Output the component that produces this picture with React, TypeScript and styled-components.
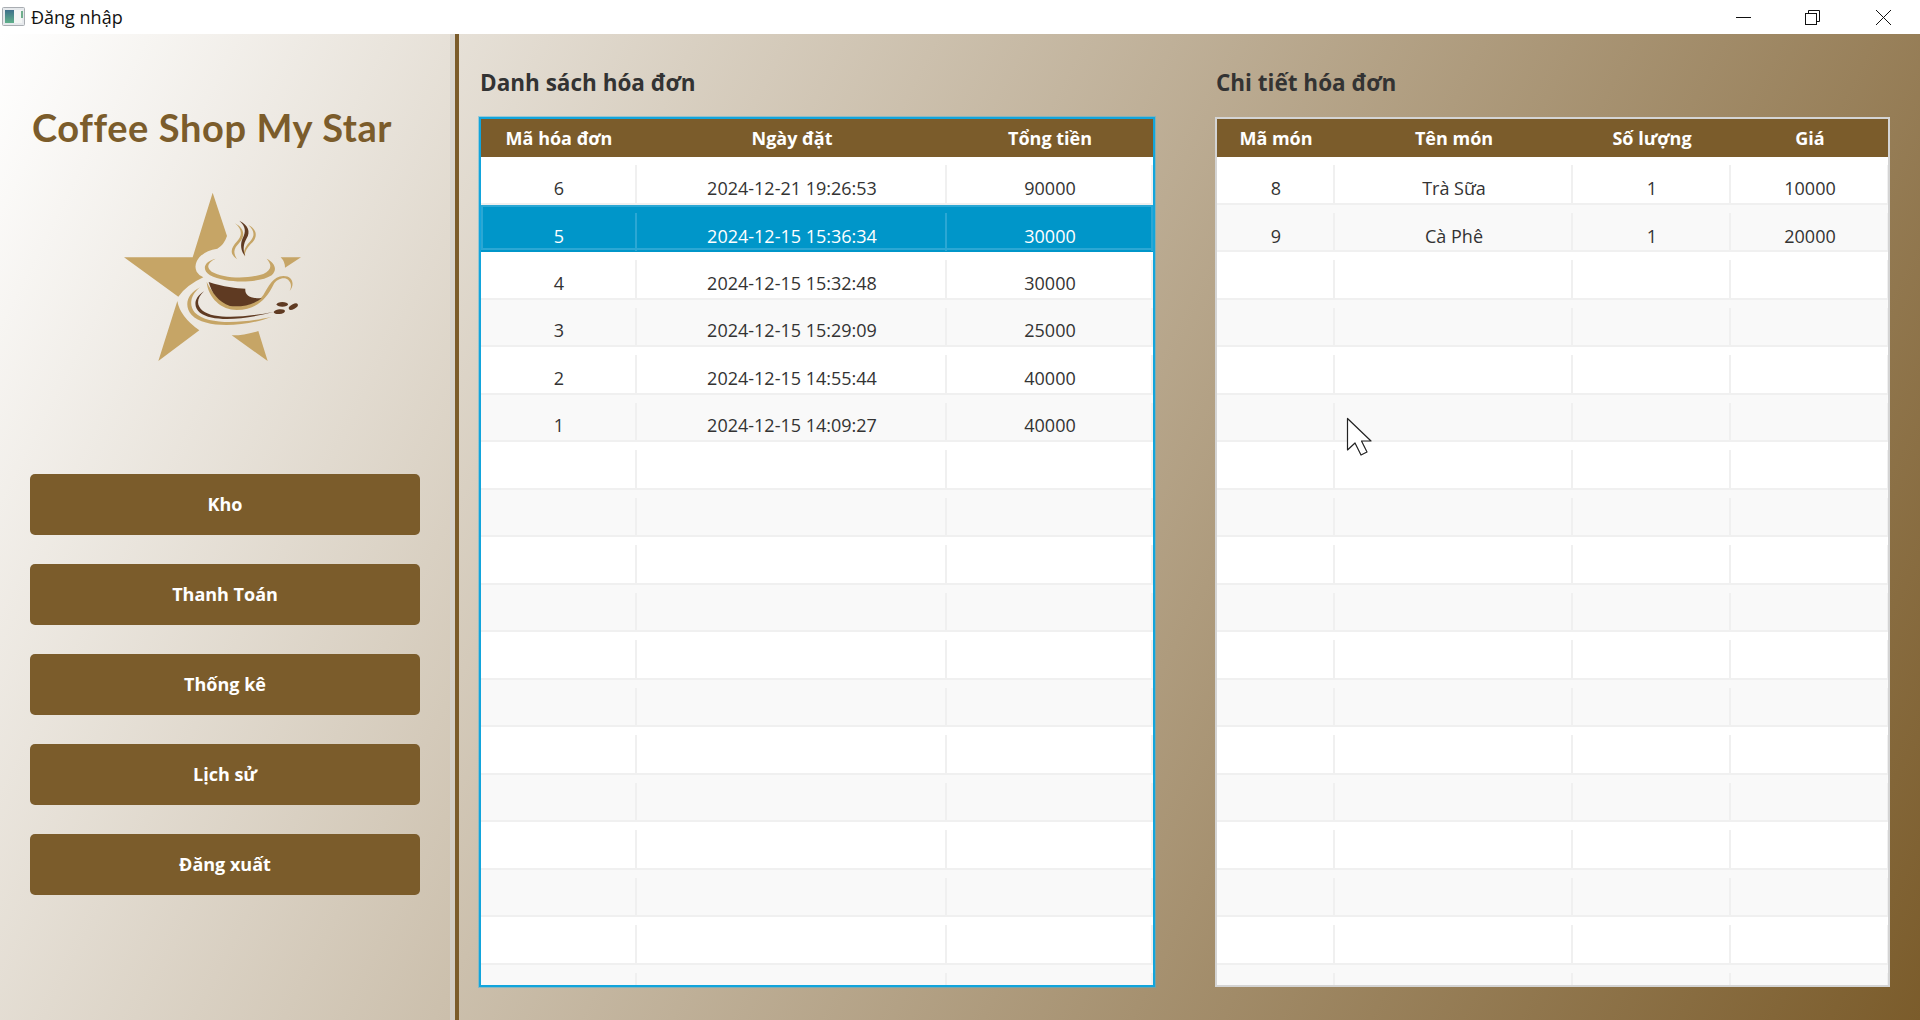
import React from "react";
import styled, { createGlobalStyle } from "styled-components";

const BROWN = "#7b5c2b";
const FONT = `"Open Sans", "Noto Sans", "Liberation Sans", sans-serif`;

const Global = createGlobalStyle`
  html, body { margin: 0; padding: 0; height: 100%; overflow: hidden; background: #fff; }
  #root { height: 100%; }
  * { box-sizing: border-box; }
`;

const Win = styled.div`
  position: relative;
  width: 1920px;
  height: 1020px;
  display: flex;
  flex-direction: column;
  font-family: ${FONT};
  overflow: hidden;
`;

const TitleBar = styled.header`
  height: 34px;
  flex: none;
  background: #fff;
  display: flex;
  align-items: center;
  padding-left: 2px;
`;

const AppIcon = styled.svg`
  width: 24px;
  height: 20px;
  flex: none;
`;

const WinTitle = styled.span`
  margin-left: 5px;
  flex: 1;
  font-size: 18px;
  color: #111;
  line-height: 34px;
`;

const WinControl = styled.button`
  width: 15px;
  height: 15px;
  border: 0;
  padding: 0;
  background: none;
  display: block;
  margin-left: ${(p: { $gap: number }) => p.$gap}px;
  svg { display: block; }
`;

const Controls = styled.div`
  display: flex;
  align-items: center;
  padding-right: 29px;
`;

const Body = styled.div`
  flex: 1;
  min-height: 0;
  display: flex;
  background: linear-gradient(117.2deg, #ffffff 0%, ${BROWN} 100%);
`;

const Sidebar = styled.aside`
  width: 459px;
  flex: none;
  border-right: 4px solid ${BROWN};
  box-shadow: inset -5px 0 0 rgba(214, 210, 202, 0.7);
  padding: 0 0 0 30px;
  display: flex;
  flex-direction: column;
`;

const Brand = styled.h1`
  margin: 70px 0 0 2px;
  font-family: "Lato", "Noto Sans", sans-serif;
  font-size: 38px;
  line-height: 46px;
  font-weight: 700;
  letter-spacing: 0.6px;
  color: ${BROWN};
  white-space: nowrap;
`;

const LogoSvg = styled.svg`
  display: block;
  width: 220px;
  height: 210px;
  margin: 20px 0 0 70px;
`;

const Menu = styled.nav`
  margin-top: 94px;
  display: flex;
  flex-direction: column;
  gap: 29px;
  width: 390px;
`;

const MenuButton = styled.button`
  height: 61px;
  border: 0;
  border-radius: 5px;
  padding: 0 0 2px;
  background: ${BROWN};
  color: #fff;
  font-family: ${FONT};
  font-size: 18px;
  font-weight: 700;
`;

const Main = styled.main`
  flex: 1;
  min-width: 0;
  display: flex;
  gap: 60px;
  padding: 0 30px 33px 20px;
`;

const Panel = styled.section<{ $width: number }>`
  width: ${(p) => p.$width}px;
  flex: none;
  display: flex;
  flex-direction: column;
`;

const Heading = styled.h2`
  margin: 31px 0 0 1px;
  height: 52px;
  font-size: 22.5px;
  line-height: 36px;
  font-weight: 700;
  color: #333;
`;

const Table = styled.div<{ $active?: boolean }>`
  flex: 1;
  min-height: 0;
  overflow: hidden;
  background: #fff;
  border: 2px solid ${(p) => (p.$active ? "#12a5dc" : "#d4d4d4")};
  box-shadow: 0 0 0 ${(p) => (p.$active ? "1px rgba(60,180,225,.45)" : "0 transparent")};
`;

const HeadRow = styled.div<{ $cols: string }>`
  display: grid;
  grid-template-columns: ${(p) => p.$cols};
  height: 38px;
  background: ${BROWN};
`;

const HeadCell = styled.div`
  display: flex;
  align-items: center;
  justify-content: center;
  color: #fff;
  font-size: 18px;
  font-weight: 700;
`;

const Row = styled.div<{ $cols: string; $alt: boolean; $selected: boolean }>`
  position: relative;
  display: grid;
  grid-template-columns: ${(p) => p.$cols};
  height: 47.5px;
  padding-top: 8px;
  background: ${(p) => (p.$selected ? "#0096c9" : p.$alt ? "#f9f9f9" : "#fff")};
  border-bottom: 2px solid ${(p) => (p.$selected ? "#0096c9" : "#f0f0f0")};
  color: ${(p) => (p.$selected ? "#fff" : "#333")};
  box-shadow: ${(p) => (p.$selected ? "inset 0 0 0 2px #2ba7d4" : "none")};
`;

const Cell = styled.div<{ $selected: boolean; $nudge: boolean }>`
  display: flex;
  align-items: center;
  justify-content: center;
  padding: ${(p) => (p.$nudge ? 9 : 7)}px 0 0 2px;
  margin-bottom: -1px;
  font-size: 18px;
  border-right: 2px solid ${(p) => (p.$selected ? "#2ba7d4" : "#f0f0f0")};
`;

const Pointer = styled.svg`
  position: absolute;
  left: 1346px;
  top: 417px;
  width: 27px;
  height: 40px;
`;

function Logo() {
  return (
    <LogoSvg viewBox="0 0 660 630" aria-label="Coffee Shop logo">
      <g fill="#c6a566">
        <path d="M338 68 L381 198 Q372 225 352 236 Q318 240 298 262 Q280 285 290 305 Q298 318 310 322 Q260 345 235 380 L72 262 L278 262 Z" />
        <path d="M232 393 Q240 440 298 481 L175 573 Z" />
        <path d="M395 496 Q430 497 475 483 L503 573 Z" />
        <path d="M542 262 L603 262 L555 293 Q555 275 542 262 Z" />
        <path d="M347 266 C310 275 305 300 330 316 C380 342 480 340 515 316 C532 300 527 280 500 266 C517 285 515 300 490 312 C440 328 370 325 335 305 C318 292 322 278 347 266 Z" />
        <path d="M320 336 C325 385 365 420 410 420 C470 420 500 385 520 345 C530 325 555 320 565 330 C575 340 575 352 568 364 C585 345 580 318 550 318 C520 318 505 350 490 375 C470 405 420 412 385 400 C350 385 335 365 320 336 Z" />
        <path d="M300 352 C262 372 250 405 275 435 C315 478 440 470 515 440 C440 458 325 468 285 428 C265 405 272 375 300 352 Z" />
        <path d="M405 160 C430 180 425 200 410 215 C395 232 385 250 412 268 C395 245 405 232 418 218 C438 195 432 175 405 160 Z" />
        <path d="M445 165 C475 180 472 205 452 222 C440 235 435 245 433 260 C428 240 440 225 452 212 C466 195 462 180 445 165 Z" />
      </g>
      <g fill="#5f3a22">
        <path d="M326 336 C370 350 410 356 436 356 C434 375 450 386 485 385 C460 405 420 412 390 408 C355 395 335 370 326 336 Z" />
        <path d="M418 152 C445 165 452 185 440 205 C430 222 428 240 436 258 C422 245 420 222 428 205 C438 185 438 170 418 152 Z" />
        <path d="M312 364 C280 385 280 410 300 428 C340 458 440 448 522 425 C440 442 345 450 308 422 C288 405 290 385 312 364 Z" />
        <ellipse cx="547" cy="403" rx="17" ry="7" />
        <ellipse cx="580" cy="410" rx="15" ry="7" transform="rotate(-28 580 410)" />
        <ellipse cx="538" cy="425" rx="17" ry="7" transform="rotate(-6 538 425)" />
      </g>
    </LogoSvg>
  );
}

const leftCols = "156px 310px 1fr";
const rightCols = "118px 238px 158px 158px 1fr";
const ROW_COUNT = 18;

const leftData = [
  ["6", "2024-12-21 19:26:53", "90000"],
  ["5", "2024-12-15 15:36:34", "30000"],
  ["4", "2024-12-15 15:32:48", "30000"],
  ["3", "2024-12-15 15:29:09", "25000"],
  ["2", "2024-12-15 14:55:44", "40000"],
  ["1", "2024-12-15 14:09:27", "40000"],
];

const rightData = [
  ["8", "Trà Sữa", "1", "10000"],
  ["9", "Cà Phê", "1", "20000"],
];

function DataTable(props: { cols: string; heads: string[]; data: string[][]; selected?: number; active?: boolean; widths: number }) {
  const rows = Array.from({ length: ROW_COUNT }, (_, i) => props.data[i] ?? Array(props.widths).fill(""));
  return (
    <Table $active={props.active}>
      <HeadRow $cols={props.cols}>
        {props.heads.map((h) => (
          <HeadCell key={h}>{h}</HeadCell>
        ))}
      </HeadRow>
      {rows.map((r, i) => (
        <Row key={i} $cols={props.cols} $alt={i % 2 === 1} $selected={i === props.selected}>
          {r.map((c, j) => (
            <Cell key={j} $selected={i === props.selected} $nudge={i === 1}>{c}</Cell>
          ))}
        </Row>
      ))}
    </Table>
  );
}

export default function App() {
  return (
    <Win>
      <Global />
      <TitleBar>
        <AppIcon viewBox="0 0 24 20">
          <defs>
            <linearGradient id="ai" x1="0" y1="0" x2="0" y2="1">
              <stop offset="0" stopColor="#3d6f8a" />
              <stop offset="1" stopColor="#5fb08a" />
            </linearGradient>
          </defs>
          <rect x="0.5" y="0.5" width="22" height="18" rx="1" fill="#e6e9ec" stroke="#a9adb2" />
          <rect x="3" y="3" width="9" height="13" fill="url(#ai)" />
          <rect x="12" y="3" width="8" height="13" fill="#f3f5f4" />
          <rect x="19" y="4" width="2" height="7" fill="#6fae8c" />
        </AppIcon>
        <WinTitle>Đăng nhập</WinTitle>
        <Controls>
          <WinControl $gap={0} aria-label="minimize">
            <svg width="15" height="15" viewBox="0 0 15 15"><path d="M0 7.5H15" stroke="#111" strokeWidth="1" /></svg>
          </WinControl>
          <WinControl $gap={54} aria-label="restore">
            <svg width="15" height="15" viewBox="0 0 15 15" fill="none" stroke="#111" strokeWidth="1">
              <rect x="0.5" y="3.5" width="11" height="11" />
              <path d="M3.5 3.5V0.5H14.5V11.5H11.5" />
            </svg>
          </WinControl>
          <WinControl $gap={56} aria-label="close">
            <svg width="15" height="15" viewBox="0 0 15 15"><path d="M0 0L15 15M15 0L0 15" stroke="#111" strokeWidth="1" /></svg>
          </WinControl>
        </Controls>
      </TitleBar>
      <Body>
        <Sidebar>
          <Brand>Coffee Shop My Star</Brand>
          <Logo />
          <Menu>
            {["Kho", "Thanh Toán", "Thống kê", "Lịch sử", "Đăng xuất"].map((t) => (
              <MenuButton key={t}>{t}</MenuButton>
            ))}
          </Menu>
        </Sidebar>
        <Main>
          <Panel $width={676}>
            <Heading>Danh sách hóa đơn</Heading>
            <DataTable cols={leftCols} widths={3} heads={["Mã hóa đơn", "Ngày đặt", "Tổng tiền"]} data={leftData} selected={1} active />
          </Panel>
          <Panel $width={675}>
            <Heading>Chi tiết hóa đơn</Heading>
            <DataTable cols={rightCols} widths={4} heads={["Mã món", "Tên món", "Số lượng", "Giá"]} data={rightData} />
          </Panel>
        </Main>
      </Body>
      <Pointer viewBox="0 0 27 40">
        <path d="M1.5 1.5 V33 L9 26 L15 38 L21 35 L15.5 24 H25 Z" fill="#fff" stroke="#222" strokeWidth="1.2" strokeLinejoin="round" />
      </Pointer>
    </Win>
  );
}
